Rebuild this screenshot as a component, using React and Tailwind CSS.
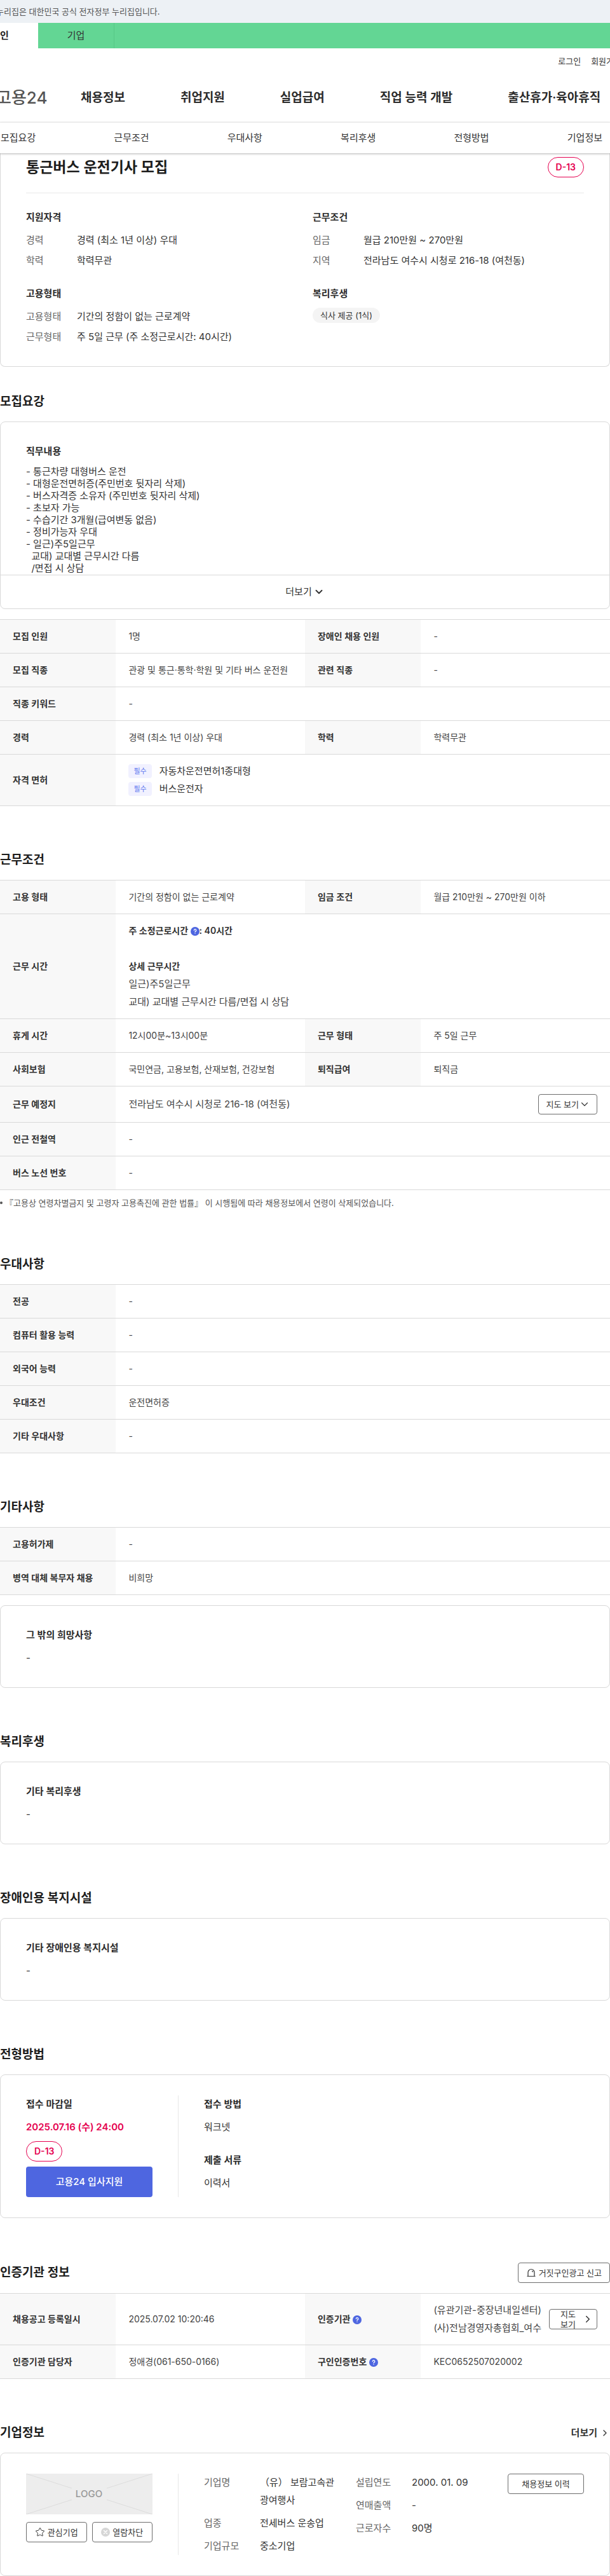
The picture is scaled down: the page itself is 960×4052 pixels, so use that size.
import { ChevronDown, ChevronRight, Star } from 'lucide-react';

const mainMenu = ['채용정보', '취업지원', '실업급여', '직업 능력 개발', '출산휴가·육아휴직'];
const anchorMenu = ['모집요강', '근무조건', '우대사항', '복리후생', '전형방법', '기업정보'];

const jobLines = [
  '- 통근차량 대형버스 운전',
  '- 대형운전면허증(주민번호 뒷자리 삭제)',
  '- 버스자격증 소유자 (주민번호 뒷자리 삭제)',
  '- 초보자 가능',
  '- 수습기간 3개월(급여변동 없음)',
  '- 정비가능자 우대',
  '- 일근)주5일근무',
  '  교대) 교대별 근무시간 다름',
  '  /면접 시 상담',
];

function HelpIcon() {
  return (
    <button type="button" aria-label="도움말" className="inline-flex size-3.5 items-center justify-center rounded-full bg-[#4e66e0] align-middle">
      <svg viewBox="0 0 14 14" className="size-3.5" fill="none" stroke="#fff" strokeWidth="1.3" strokeLinecap="round" aria-hidden="true">
        <path d="M5.4 5.4a1.7 1.7 0 1 1 2.5 1.5c-.6.35-.9.6-.9 1.2" />
        <path d="M7 10.2v.1" />
      </svg>
    </button>
  );
}

function DdayBadge() {
  return (
    <span className="inline-flex h-8 items-center rounded-full border border-[#e5004f] px-3 text-[14px] font-semibold text-[#e5004f]">
      D-13
    </span>
  );
}

function OutlineButton({ children, className = '' }) {
  return (
    <button type="button" className={`flex h-8 items-center justify-center rounded border border-[#6d6d6d] text-[13px] leading-4 text-[#333] ${className}`}>
      {children}
    </button>
  );
}

function Card({ children }) {
  return <div className="rounded-lg border border-[#d9d9d9] px-10 py-8">{children}</div>;
}

function CardTitle({ children }) {
  return <h3 className="mb-2 font-semibold text-[#2c2c2c]">{children}</h3>;
}

function Section({ title, action, first = false, children }) {
  return (
    <section className={first ? 'mt-10' : 'mt-[70px]'}>
      <div className="mb-4 flex items-center justify-between">
        <h2 className="text-[19px] font-semibold leading-[30px] text-[#1d1d1d]">{title}</h2>
        {action}
      </div>
      {children}
    </section>
  );
}

// each row is a flat list of [label, value] pairs
function InfoTable({ caption, rows, className = '' }) {
  return (
    <table className={`w-full table-fixed border-collapse border-b border-[#d9d9d9] text-[14px] ${className}`}>
      <caption className="sr-only">{caption}</caption>
      <colgroup>
        <col className="w-[19%]" />
        <col className="w-[31%]" />
        <col className="w-[19%]" />
        <col className="w-[31%]" />
      </colgroup>
      <tbody>
        {rows.map((row, i) => (
          <tr key={i} className="border-t border-[#d9d9d9]">
            {row.map(([label, value], j) => (
              <Pair key={j} label={label} value={value} wide={row.length === 1} />
            ))}
          </tr>
        ))}
      </tbody>
    </table>
  );
}

function Pair({ label, value, wide }) {
  return (
    <>
      <th scope="row" className="bg-[#f8f8f8] px-5 py-3 text-left font-semibold text-[#333]">{label}</th>
      <td colSpan={wide ? 3 : 1} className="px-5 py-3 text-[#444]">{value}</td>
    </>
  );
}

function License({ name }) {
  return (
    <li className="flex items-center gap-3">
      <span className="flex h-[22px] items-center rounded bg-[#f1f1ff] px-2 text-[11px] text-[#5b74ee]">필수</span>
      <span className="text-[15px] text-[#333]">{name}</span>
    </li>
  );
}

function Summary({ title, items, children }) {
  return (
    <div>
      <CardTitle>{title}</CardTitle>
      {items && (
        <dl className="space-y-1">
          {items.map(([label, value]) => (
            <div key={label} className="flex">
              <dt className="w-20 shrink-0 text-[#666]">{label}</dt>
              <dd className="text-[#333]">{value}</dd>
            </div>
          ))}
        </dl>
      )}
      {children}
    </div>
  );
}

function CompanyList({ items }) {
  return (
    <dl className="flex-1 space-y-2">
      {items.map(([label, value]) => (
        <div key={label} className="flex">
          <dt className="w-22 shrink-0 text-[#666]">{label}</dt>
          <dd className="whitespace-nowrap text-[#333]">{value}</dd>
        </div>
      ))}
    </dl>
  );
}

function Header() {
  return (
    <header className="overflow-hidden">
      <div className="flex h-9 items-center bg-[#edf1f5] text-[13px] text-[#555]">
        <p className="-ml-1.5">누리집은 대한민국 공식 전자정부 누리집입니다.</p>
      </div>
      <div className="flex h-10 bg-[#63d694] leading-10">
        <a href="#personal" className="w-15 bg-white font-semibold text-[#222]">인</a>
        <a href="#company" className="w-30 border-r border-[#56c886] text-center text-[#333]">기업</a>
      </div>
      <div className="-mr-[18px] flex justify-end gap-4 py-2 text-[13px] leading-6 text-[#333]">
        <a href="#login">로그인</a>
        <a href="#join">회원가입</a>
      </div>
      <div className="flex h-[76px] items-center">
        <a href="#home" className="-ml-1.5 w-[133px] shrink-0 text-[26px] font-medium text-[#555]">고용24</a>
        <nav className="flex gap-[87px] whitespace-nowrap text-[19px] font-semibold text-[#2c2c2c]">
          {mainMenu.map((m) => (
            <a key={m} href="#menu">{m}</a>
          ))}
        </nav>
      </div>
    </header>
  );
}

export default function App() {
  return (
    <div className="bg-white font-['Inter','Noto_Sans_CJK_KR',sans-serif] text-[15px] leading-7 text-[#333]">
      <Header />
      <nav className="relative z-10 flex h-[49px] items-center justify-between border-t border-[#e8e8e8] bg-white pr-3 pl-px shadow-[0_1px_3px_rgba(0,0,0,0.3)]">
        {anchorMenu.map((m) => (
          <a key={m} href={`#${m}`}>{m}</a>
        ))}
      </nav>

      <main>
        <section className="rounded-b-lg border border-t-0 border-[#d9d9d9] px-10 pt-1.5 pb-8">
          <div className="flex items-start justify-between border-b border-[#e8e8e8] pb-6">
            <h1 className="text-[23px] font-semibold leading-8 text-[#1d1d1d]">통근버스 운전기사 모집</h1>
            <DdayBadge />
          </div>
          <div className="mt-6 grid grid-cols-2 gap-6">
            <Summary title="지원자격" items={[['경력', '경력 (최소 1년 이상) 우대'], ['학력', '학력무관']]} />
            <Summary title="근무조건" items={[['임금', '월급 210만원 ~ 270만원'], ['지역', '전라남도 여수시 시청로 216-18 (여천동)']]} />
            <Summary title="고용형태" items={[['고용형태', '기간의 정함이 없는 근로계약'], ['근무형태', '주 5일 근무 (주 소정근로시간: 40시간)']]} />
            <Summary title="복리후생">
              <span className="inline-flex h-6 items-center rounded-full bg-[#f4f4f4] px-3 align-top text-[13px]">식사 제공 (1식)</span>
            </Summary>
          </div>
        </section>

        <Section title="모집요강" first>
          <div className="rounded-lg border border-[#d9d9d9]">
            <div className="px-10 pt-8 pb-px">
              <CardTitle>직무내용</CardTitle>
              <p className="whitespace-pre-wrap leading-[19px]">{jobLines.join('\n')}</p>
            </div>
            <button type="button" className="flex h-[53px] w-full items-center justify-center gap-0.5 border-t border-[#d9d9d9]">
              더보기
              <ChevronDown size={18} strokeWidth={2.5} />
            </button>
          </div>
          <InfoTable
            className="mt-4"
            caption="모집요강"
            rows={[
              [['모집 인원', '1명'], ['장애인 채용 인원', '-']],
              [['모집 직종', '관광 및 통근·통학·학원 및 기타 버스 운전원'], ['관련 직종', '-']],
              [['직종 키워드', '-']],
              [['경력', '경력 (최소 1년 이상) 우대'], ['학력', '학력무관']],
              [['자격 면허', <ul><License name="자동차운전면허1종대형" /><License name="버스운전자" /></ul>]],
            ]}
          />
        </Section>

        <Section title="근무조건">
          <InfoTable
            caption="근무조건"
            rows={[
              [['고용 형태', '기간의 정함이 없는 근로계약'], ['임금 조건', '월급 210만원 ~ 270만원 이하']],
              [['근무 시간', (
                <>
                  <p className="mb-7 font-semibold text-[#333]">주 소정근로시간 <HelpIcon />: 40시간</p>
                  <p className="font-semibold text-[#333]">상세 근무시간</p>
                  <p className="text-[15px]">일근)주5일근무<br />교대) 교대별 근무시간 다름/면접 시 상담</p>
                </>
              )]],
              [['휴게 시간', '12시00분~13시00분'], ['근무 형태', '주 5일 근무']],
              [['사회보험', '국민연금, 고용보험, 산재보험, 건강보험'], ['퇴직급여', '퇴직금']],
              [['근무 예정지', (
                <div className="flex items-center justify-between text-[15px]">
                  전라남도 여수시 시청로 216-18 (여천동)
                  <OutlineButton className="pr-2.5 pl-3">지도 보기<ChevronDown size={18} strokeWidth={1.5} /></OutlineButton>
                </div>
              )]],
              [['인근 전철역', '-']],
              [['버스 노선 번호', '-']],
            ]}
          />
          <ul className="mt-2 text-[13px] leading-6 text-[#555]">
            <li className="flex items-center gap-1">
              <span className="size-1 rounded-full bg-[#555]" />
              『고용상 연령차별금지 및 고령자 고용촉진에 관한 법률』 이 시행됨에 따라 채용정보에서 연령이 삭제되었습니다.
            </li>
          </ul>
        </Section>

        <Section title="우대사항">
          <InfoTable
            caption="우대사항"
            rows={[
              [['전공', '-']],
              [['컴퓨터 활용 능력', '-']],
              [['외국어 능력', '-']],
              [['우대조건', '운전면허증']],
              [['기타 우대사항', '-']],
            ]}
          />
        </Section>

        <Section title="기타사항">
          <InfoTable caption="기타사항" className="mb-4" rows={[[['고용허가제', '-']], [['병역 대체 복무자 채용', '비희망']]]} />
          <Card>
            <CardTitle>그 밖의 희망사항</CardTitle>
            <p>-</p>
          </Card>
        </Section>

        <Section title="복리후생">
          <Card>
            <CardTitle>기타 복리후생</CardTitle>
            <p>-</p>
          </Card>
        </Section>

        <Section title="장애인용 복지시설">
          <Card>
            <CardTitle>기타 장애인용 복지시설</CardTitle>
            <p>-</p>
          </Card>
        </Section>

        <Section title="전형방법">
          <Card>
            <div className="flex gap-10">
              <div className="flex w-[199px] flex-col items-start">
                <CardTitle>접수 마감일</CardTitle>
                <p className="mb-2 font-semibold text-[#e5004f]">2025.07.16 (수) 24:00</p>
                <DdayBadge />
                <button type="button" className="mt-2 h-12 w-full rounded bg-[#4e66e0] font-medium text-white">고용24 입사지원</button>
              </div>
              <div className="border-l border-[#e8e8e8] pl-10">
                <CardTitle>접수 방법</CardTitle>
                <p className="mb-6">워크넷</p>
                <CardTitle>제출 서류</CardTitle>
                <p>이력서</p>
              </div>
            </div>
          </Card>
        </Section>

        <Section
          title="인증기관 정보"
          action={
            <OutlineButton className="gap-1 px-3">
              <svg viewBox="0 0 16 16" className="size-4" fill="none" stroke="currentColor" strokeWidth="1.2" aria-hidden="true">
                <path d="M3 13.5V7.5a5 5 0 0 1 10 0v6M1.5 13.5h13" />
                <path d="M9 5.2c.9.3 1.4.9 1.6 1.8" />
              </svg>
              거짓구인광고 신고
            </OutlineButton>
          }
        >
          <InfoTable
            caption="인증기관 정보"
            rows={[
              [
                ['채용공고 등록일시', '2025.07.02 10:20:46'],
                [<>인증기관 <HelpIcon /></>, (
                  <div className="flex items-center justify-between">
                    <p className="whitespace-nowrap text-[15px]">(유관기관-중장년내일센터)<br />(사)전남경영자총협회_여수</p>
                    <OutlineButton className="w-[76px] shrink-0 gap-2.5 pr-1 pl-4"><span>지도<br />보기</span><ChevronRight size={18} /></OutlineButton>
                  </div>
                )],
              ],
              [['인증기관 담당자', '정애경(061-650-0166)'], [<>구인인증번호 <HelpIcon /></>, 'KEC0652507020002']],
            ]}
          />
        </Section>

        <Section
          title="기업정보"
          action={<a href="#more" className="flex items-center gap-1 font-semibold">더보기<ChevronRight size={16} /></a>}
        >
          <Card>
            <div className="flex gap-10">
              <div className="w-[199px] shrink-0">
                <svg viewBox="0 0 199 64" className="h-16 w-full bg-[#ededed]" role="img" aria-label="LOGO">
                  <path d="M0 0l72 23M199 0l-72 23M0 64l72-23M199 64l-72-23" stroke="#dcdcdc" fill="none" />
                  <text x="99" y="37" textAnchor="middle" fontSize="15" fontWeight="500" fill="#999">LOGO</text>
                </svg>
                <div className="mt-3 flex gap-2">
                  <OutlineButton className="flex-1 gap-1"><Star size={16} strokeWidth={1.5} />관심기업</OutlineButton>
                  <OutlineButton className="flex-1 gap-1">
                    <svg viewBox="0 0 14 14" className="size-3.5" aria-hidden="true">
                      <circle cx="7" cy="7" r="7" fill="#d6d6d6" />
                      <path d="M4.5 4.5l5 5M9.5 4.5l-5 5" stroke="#fff" strokeWidth="1.4" strokeLinecap="round" />
                    </svg>
                    열람차단
                  </OutlineButton>
                </div>
              </div>
              <div className="flex flex-1 gap-6 border-l border-[#e8e8e8] pl-10">
                <CompanyList items={[['기업명', <>（유） 보람고속관<br />광여행사</>], ['업종', '전세버스 운송업'], ['기업규모', '중소기업']]} />
                <CompanyList items={[['설립연도', '2000. 01. 09'], ['연매출액', '-'], ['근로자수', '90명']]} />
                <OutlineButton className="w-30">채용정보 이력</OutlineButton>
              </div>
            </div>
          </Card>
        </Section>
      </main>
    </div>
  );
}
